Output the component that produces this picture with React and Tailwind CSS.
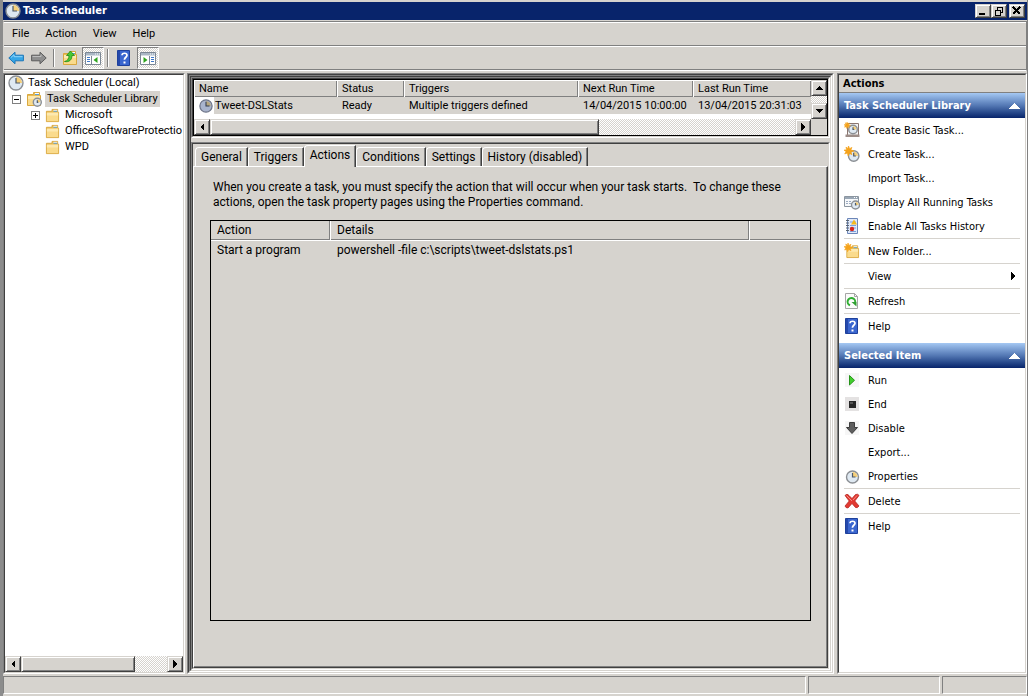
import { useState } from 'react'

// ─── Bevels ───────────────────────────────────────────────────────────────────

const RAISED =
  'border border-t-[#d6d3ce] border-l-[#d6d3ce] border-r-[#404040] border-b-[#404040] bg-[#d6d3ce] shadow-[inset_1px_1px_#fff,inset_-1px_-1px_#808080]'

const TRACK =
  'bg-[repeating-conic-gradient(#fff_0_25%,#d6d3ce_0_50%)] bg-[length:2px_2px]'

function Inset({ className = '', children }) {
  return (
    <div className={`flex flex-col min-w-0 min-h-0 border border-t-[#808080] border-l-[#808080] border-r-white border-b-white ${className}`}>
      <div className="flex flex-col flex-1 min-w-0 min-h-0 border border-t-[#404040] border-l-[#404040] border-r-[#d6d3ce] border-b-[#d6d3ce]">
        {children}
      </div>
    </div>
  )
}

// ─── Icons ────────────────────────────────────────────────────────────────────

function Icon({ children, className = 'w-4 h-4' }) {
  return (
    <svg viewBox="0 0 16 16" className={`${className} shrink-0`} aria-hidden="true">
      {children}
    </svg>
  )
}

function ClockFace({ cx = 8, cy = 8, r = 7 }) {
  return (
    <g>
      <circle cx={cx} cy={cy} r={r} fill="#dfe9f2" stroke="#8b8f94" strokeWidth="1.4" />
      <path d={`M${cx} ${cy}V${cy - r + 1}A${r - 1} ${r - 1} 0 0 1 ${cx + r - 1} ${cy}Z`} fill="#f6cf78" />
      <path d={`M${cx} ${cy - r + 2}V${cy}H${cx + r - 3}`} fill="none" stroke="#4d5a6b" strokeWidth="1.2" />
    </g>
  )
}

function FolderShape() {
  return (
    <g>
      <path d="M1.5 3.5h6v-2h6v3h1v10h-13z" fill="#e9bd55" stroke="#d9a83f" />
      <path d="M9 2.5h4" stroke="#fff" />
      <path d="M9 3.5h4" stroke="#5aa0d8" />
      <path d="M2 5h12v9H2z" fill="#fadb8c" />
      <path d="M2 5h12v3H2z" fill="#fde9b0" />
    </g>
  )
}

const Star = () => (
  <path d="M5 0l1.200 3 2.600-1.400-1.200 2.700L11 5.500 7.700 6.600l1 3-2.800-1.600L4.600 11 3.700 7.800.8 8.800l1.500-2.700L0 4.600l3-.4-.8-2.900 2.200 1.500z" fill="#f5a31c" stroke="#f5a31c" strokeWidth=".8" />
)

const ClockIcon = () => <Icon><ClockFace /></Icon>

const TaskIcon = () => (
  <Icon className="w-[14px] h-[14px]">
    <circle cx="8" cy="8" r="7" fill="#a9b4cc" stroke="#6d7488" strokeWidth="1.400" />
    <path d="M8 8V2.500A5.500 5.500 0 0 1 13.500 8z" fill="#b6a77e" />
    <path d="M8 3v5h4" fill="none" stroke="#333c50" strokeWidth="1.200" />
  </Icon>
)

const FolderIcon = () => <Icon className="w-[15px] h-[15px]"><FolderShape /></Icon>

const LibraryIcon = () => (
  <Icon>
    <FolderShape />
    <ClockFace cx={11.3} cy={11.3} r={4} />
  </Icon>
)

const HelpIcon = () => (
  <Icon>
    <path d="M1.500 .5h12v15h-12z" fill="#3a66cf" stroke="#1f419c" />
    <path d="M2 1h2v14H2z" fill="#2549ac" />
    <path d="M6 5.200C6 2.600 11 2.500 11 5.300c0 2-2.600 2-2.600 4.500" fill="none" stroke="#fff" strokeWidth="1.700" />
    <path d="M7.500 11.500h2v2h-2z" fill="#fff" />
  </Icon>
)

const BackIcon = () => (
  <Icon>
    <path d="M.8 8L7 2.200v3h8.400v5.600H7v3z" fill="#37a6e6" stroke="#1c76b8" />
    <path d="M3 7.500l3-2.800v2h8.500" fill="none" stroke="#8fd6fa" />
  </Icon>
)

const ForwardIcon = () => (
  <Icon>
    <path d="M15.200 8L9 2.200v3H.6v5.600H9v3z" fill="#8f8f8f" stroke="#5c5c5c" />
    <path d="M1.500 6.500H10v-2" fill="none" stroke="#bdbdbd" />
  </Icon>
)

const UpFolderIcon = () => (
  <Icon>
    <FolderShape />
    <path d="M2.500 11.500C5.500 11 7 8.500 7 5.500H4.500L8.500 1l4 4.500H10c0 4-2.500 7-7.500 6z" fill="#49c935" stroke="#1f8a16" strokeWidth=".8" />
  </Icon>
)

function PaneIcon({ side }) {
  return (
    <Icon>
      <path d="M.5 2.500h15v12H.5z" fill="#fff" stroke="#7b8794" />
      <path d="M1 3h14v2.500H1z" fill="#a9b6c4" />
      <path d="M10 4h1M12 4h1M14 4h1" stroke="#fff" />
      {side === 'left' ? (
        <g>
          <path d="M6.500 6v8" stroke="#7b8794" />
          <path d="M2 7.500h3M2 9.500h3M2 11.500h3" stroke="#3f78c8" />
          <path d="M12.500 7v6L8.500 10z" fill="#2ea51f" />
        </g>
      ) : (
        <g>
          <path d="M9.500 6v8" stroke="#7b8794" />
          <path d="M11 7.500h3M11 9.500h3M11 11.500h3" stroke="#3f78c8" />
          <path d="M3.500 7v6l4-3z" fill="#2ea51f" />
        </g>
      )}
    </Icon>
  )
}

const BasicTaskIcon = () => (
  <Icon>
    <path d="M3.500 1.500h11v13h-11z" fill="#f4f4f4" stroke="#8a7670" />
    <path d="M1.500 12.500h14v2.500h-14z" fill="#9c8d88" />
    <ClockFace cx={9} cy={7.5} r={4.3} />
    <g transform="scale(.6)"><Star /></g>
  </Icon>
)

const CreateTaskIcon = () => (
  <Icon>
    <ClockFace cx={9.7} cy={10} r={5.2} />
    <g transform="scale(.9)"><Star /></g>
  </Icon>
)

const RunningIcon = () => (
  <Icon>
    <path d="M.5 2.500h14v10H.5z" fill="#f7f9fb" stroke="#8b95a0" />
    <path d="M1 3h13v2H1z" fill="#9aa7b5" />
    <path d="M10 3.500h1M12 3.500h1" stroke="#fff" />
    <path d="M2 7.500h6M2 9.500h5" stroke="#9dabc0" strokeDasharray="2 1" />
    <ClockFace cx={11.5} cy={11} r={4} />
  </Icon>
)

const HistoryIcon = () => (
  <Icon>
    <path d="M3.500 .5h10v15h-10z" fill="#dfe9fa" stroke="#6c86b8" />
    <path d="M2 2.500h3M2 5h3M2 7.500h3M2 10h3M2 12.500h3" stroke="#5b6470" />
    <path d="M6 4h6M6 7.500h6M6 10h6M6 13.500h6" stroke="#7ba0dc" />
    <path d="M10 1.500l3 5H7z" fill="#f5b91c" />
    <circle cx="8" cy="11" r="2.200" fill="#d8261c" />
  </Icon>
)

const NewFolderIcon = () => (
  <Icon>
    <g transform="translate(1.500 1.500) scale(.9)"><FolderShape /></g>
    <g transform="scale(.8)"><Star /></g>
  </Icon>
)

const RefreshIcon = () => (
  <Icon>
    <path d="M1.500 .5h9l3 3v12h-12z" fill="#fbfbfb" stroke="#a5a5a5" />
    <path d="M10.500 .5v3h3" fill="none" stroke="#a5a5a5" />
    <path d="M6 12.300A3.800 3.800 0 1 1 11 10" fill="none" stroke="#2fae31" strokeWidth="2" />
    <path d="M7.500 9h5v4.500z" fill="#2f9e31" />
  </Icon>
)

const RunIcon = () => (
  <Icon>
    <path d="M1 1h14v14H1z" fill="#f6f6f6" />
    <path d="M5.500 3.500v9.500l5-4.700z" fill="#42cf2c" stroke="#26931a" />
  </Icon>
)

const EndIcon = () => (
  <Icon>
    <path d="M1 1h14v14H1z" fill="#e4e2e2" />
    <path d="M5 5h7v7H5z" fill="#262626" />
    <path d="M6 6h3v2H6z" fill="#555" />
  </Icon>
)

const DisableIcon = () => (
  <Icon>
    <path d="M1 1h14v14H1z" fill="#f6f6f6" />
    <path d="M5.500 2.500h5v5h3L8 13.500 2.500 7.500h3z" fill="#5e5e5e" stroke="#3d3d3d" />
  </Icon>
)

const PropertiesIcon = () => <Icon><ClockFace cx={8.5} cy={9} r={6} /></Icon>

const DeleteIcon = () => (
  <Icon>
    <path d="M1 2.500Q3 0 5 2.500L8 5.500 11.500 1.500Q14 .5 15 2.500L10.800 8 15 13Q13.500 15.500 11.500 14.500L8 10.500 4 15Q1.500 15 1 13L5.200 8z" fill="#e23a32" stroke="#b01d18" strokeWidth=".7" />
    <path d="M2.500 2.500L8 8M13 2.500L9 7" stroke="#f58b84" />
  </Icon>
)

function Arrow({ dir, className = 'w-2 h-2 text-black' }) {
  const d = {
    left: 'M6 0v8L2 4z',
    right: 'M2 0v8l4-4z',
    up: 'M0 6h8L4 2z',
    down: 'M0 2h8L4 6z',
  }[dir]
  return (
    <svg viewBox="0 0 8 8" className={`shrink-0 ${className}`} shapeRendering="crispEdges" aria-hidden="true">
      <path d={d} fill="currentColor" />
    </svg>
  )
}

function ScrollButton({ dir }) {
  return (
    <button aria-label={`Scroll ${dir}`} className={`w-4 h-4 shrink-0 flex items-center justify-center ${RAISED}`}>
      <Arrow dir={dir} />
    </button>
  )
}

// ─── Title, menu and tool bars ────────────────────────────────────────────────

function CaptionButton({ label, children, className = '' }) {
  return (
    <button aria-label={label} className={`w-4 h-[14px] flex items-center justify-center ${RAISED} ${className}`}>
      <svg viewBox="0 0 10 10" className="w-[10px] h-[10px]" fill="none" stroke="#000" shapeRendering="crispEdges">
        {children}
      </svg>
    </button>
  )
}

function TitleBar() {
  return (
    <header className="h-[18px] flex items-center pl-0.5 pr-0.5 bg-[#08246b] text-white">
      <ClockIcon />
      <h1 className="flex-1 ml-0.5 font-bold leading-4 font-['DejaVu_Sans_Condensed',sans-serif]">Task Scheduler</h1>
      <CaptionButton label="Minimize"><path d="M1 8h6" strokeWidth="2" /></CaptionButton>
      <CaptionButton label="Restore">
        <path d="M3 1h6M3.500 1v3M8.500 1v5M6 6.500h3M1 4.500h6M1.500 4v5M6.500 4v5M1 9.500h6" />
      </CaptionButton>
      <CaptionButton label="Close" className="ml-0.5"><path d="M1 1l7 7M8 1l-7 7" strokeWidth="1.600" /></CaptionButton>
    </header>
  )
}

const MENUS = ['File', 'Action', 'View', 'Help']

const Divider = () => <span className="w-px h-[18px] bg-[#808080] border-r border-white box-content" />

function ToolButton({ label, pressed, children, className = '' }) {
  return (
    <button
      aria-label={label}
      aria-pressed={pressed}
      className={[
        'h-[22px] w-[22px] flex items-center justify-center border',
        pressed ? `border-t-[#808080] border-l-[#808080] border-r-white border-b-white ${TRACK}` : 'border-transparent',
        className,
      ].join(' ')}
    >
      {children}
    </button>
  )
}

function Bars() {
  return (
    <div className="mt-px border border-t-[#808080] border-l-[#d6d3ce] border-r-[#808080] border-b-white">
      <nav className="h-[23px] flex items-center gap-4 pl-2 border-t border-white" aria-label="Menu bar">
        {MENUS.map(m => <button key={m}>{m}</button>)}
      </nav>
      <div className="border-t border-[#808080]" />
      <div className="h-[23px] flex items-center pl-px border-t border-white">
        <ToolButton label="Back"><BackIcon /></ToolButton>
        <ToolButton label="Forward" className="ml-px"><ForwardIcon /></ToolButton>
        <span className="w-[3px]" />
        <Divider />
        <ToolButton label="Up one level" className="ml-1"><UpFolderIcon /></ToolButton>
        <ToolButton label="Console tree" pressed className="ml-px"><PaneIcon side="left" /></ToolButton>
        <span className="w-[3px]" />
        <Divider />
        <ToolButton label="Help" className="ml-1"><HelpIcon /></ToolButton>
        <ToolButton label="Action pane" pressed className="ml-0.5"><PaneIcon side="right" /></ToolButton>
      </div>
      <div className="border-t border-[#808080]" />
    </div>
  )
}

// ─── Tree ─────────────────────────────────────────────────────────────────────

function Expander({ open }) {
  return (
    <button aria-label={open ? 'Collapse' : 'Expand'} className="w-[9px] h-[9px] shrink-0">
      <svg viewBox="0 0 9 9" className="w-[9px] h-[9px]" fill="none" shapeRendering="crispEdges">
        <path d="M.5 .5h8v8h-8z" stroke="#808080" />
        <path d={open ? 'M2 4.500h5' : 'M2 4.500h5M4.500 2v5'} stroke="#000" />
      </svg>
    </button>
  )
}

const FOLDERS = [
  { name: 'Microsoft', expandable: true },
  { name: 'OfficeSoftwareProtectio' },
  { name: 'WPD' },
]

function TreePane() {
  return (
    <Inset className="w-[182px] shrink-0 bg-white">
      <ul className="flex-1 min-h-0 overflow-hidden whitespace-nowrap">
        <li className="h-4 flex items-center gap-1 pl-[3px]"><ClockIcon /> Task Scheduler (Local)</li>
        <li>
          <div className="h-4 flex items-center pl-[7px]">
            <Expander open />
            <span className="ml-[5px] flex"><LibraryIcon /></span>
            <span className="ml-[3px] px-0.5 h-4 leading-4 bg-[#d6d3ce]">Task Scheduler Library</span>
          </div>
          <ul>
            {FOLDERS.map(f => (
              <li key={f.name} className="h-4 flex items-center pl-[26px]">
                {f.expandable ? <Expander /> : <span className="w-[9px] shrink-0" />}
                <span className="mx-[5px] flex"><FolderIcon /></span>
                {f.name}
              </li>
            ))}
          </ul>
        </li>
      </ul>
      <div className={`h-4 flex ${TRACK}`}>
        <ScrollButton dir="left" />
        <div className={`w-[114px] ${RAISED}`} />
        <span className="flex-1" />
        <ScrollButton dir="right" />
      </div>
    </Inset>
  )
}

// ─── Task list ────────────────────────────────────────────────────────────────

const HEAD_CELL =
  'h-[17px] p-0 pt-px pl-[5px] text-left font-normal bg-[#d6d3ce] shadow-[inset_1px_1px_#fff,inset_-1px_-1px_#808080]'

function TaskList() {
  return (
    <Inset className="h-[61px] shrink-0">
      <div className="flex-1 flex flex-col min-w-0 border border-black bg-white">
        <div className="flex flex-1">
          <div className="flex-1 min-w-0">
            <table className="w-full table-fixed border-collapse whitespace-nowrap">
              <colgroup>
                <col className="w-[143px]" />
                <col className="w-[67px]" />
                <col className="w-[174px]" />
                <col className="w-[115px]" />
                <col />
              </colgroup>
              <thead>
                <tr>
                  {['Name', 'Status', 'Triggers', 'Next Run Time', 'Last Run Time'].map(h => (
                    <th key={h} className={HEAD_CELL}>{h}</th>
                  ))}
                </tr>
              </thead>
              <tbody>
                <tr className="bg-[#d6d3ce]">
                  <td className="h-[17px] p-0">
                    <div className="flex items-center">
                      <span className="w-5 h-[17px] pl-[5px] flex items-center bg-white"><TaskIcon /></span>
                      <span className="pt-px pl-px">Tweet-DSLStats</span>
                    </div>
                  </td>
                  <td className="p-0 pt-px pl-[5px]">Ready</td>
                  <td className="p-0 pt-px pl-[5px]">Multiple triggers defined</td>
                  <td className="p-0 pt-px pl-[5px]">14/04/2015 10:00:00</td>
                  <td className="p-0 pt-px pl-[5px]">13/04/2015 20:31:03</td>
                </tr>
              </tbody>
            </table>
          </div>
          <div className={`w-4 flex flex-col justify-between ${TRACK}`}>
            <ScrollButton dir="up" />
            <ScrollButton dir="down" />
          </div>
        </div>
        <div className="h-4 flex bg-[#d6d3ce]">
          <div className={`flex-1 flex ${TRACK}`}>
            <ScrollButton dir="left" />
            <div className={`w-[63%] ${RAISED}`} />
            <span className="flex-1" />
            <ScrollButton dir="right" />
          </div>
          <span className="w-4" />
        </div>
      </div>
    </Inset>
  )
}

// ─── Task details ─────────────────────────────────────────────────────────────

const TABS = ['General', 'Triggers', 'Actions', 'Conditions', 'Settings', 'History (disabled)']

function TaskDetails() {
  const [active, setActive] = useState('Actions')

  return (
    <Inset className="flex-1 mt-1 text-[12px]">
      <div className="h-[22px] flex items-end pl-0.5 shrink-0" role="tablist">
        {TABS.map(tab => (
          <button
            key={tab}
            role="tab"
            aria-selected={active === tab}
            onClick={() => setActive(tab)}
            className={[
              'px-[5px] leading-4 whitespace-nowrap border-t border-l border-t-white border-l-white rounded-tl-sm shadow-[inset_-1px_0_#808080]',
              'border-r border-r-[#404040] bg-[#d6d3ce]',
              active === tab ? 'h-[22px] pb-1 -mb-px relative z-10' : 'h-[19px]',
            ].join(' ')}
          >
            {tab}
          </button>
        ))}
      </div>
      <div className="flex-1 flex flex-col px-4 pt-[13px] pb-[46px] border border-t-white border-l-white border-r-[#404040] border-b-[#404040] shadow-[inset_-1px_-1px_#808080]">
        <p className="leading-[15px] pl-[3px] pr-4 whitespace-pre-wrap">
          When you create a task, you must specify the action that will occur when your task starts.  To change these actions, open the task property pages using the Properties command.
        </p>
        <div className="flex-1 mt-2.5 border border-black">
          <table className="w-full table-fixed border-collapse">
            <colgroup>
              <col className="w-[119px]" />
              <col />
              <col className="w-[61px]" />
            </colgroup>
            <thead>
              <tr className="text-left">
                <th className="h-[19px] p-0 pl-1.5 font-normal shadow-[inset_-1px_-1px_#808080]">Action</th>
                <th className="h-[19px] p-0 pl-[7px] font-normal shadow-[inset_1px_0_#fff,inset_-1px_-1px_#808080]">Details</th>
                <th aria-label="Spare" className="p-0 shadow-[inset_1px_0_#fff,inset_0_-1px_#808080]" />
              </tr>
            </thead>
            <tbody>
              <tr className="border-t border-white">
                <td className="h-5 p-0 pl-1.5">Start a program</td>
                <td className="p-0 pl-[7px]">powershell -file c:\scripts\tweet-dslstats.ps1</td>
                <td className="p-0" />
              </tr>
            </tbody>
          </table>
        </div>
      </div>
    </Inset>
  )
}

// ─── Actions pane ─────────────────────────────────────────────────────────────

const LIBRARY_GROUPS = [
  [
    { label: 'Create Basic Task...', icon: BasicTaskIcon },
    { label: 'Create Task...', icon: CreateTaskIcon },
    { label: 'Import Task...' },
    { label: 'Display All Running Tasks', icon: RunningIcon },
    { label: 'Enable All Tasks History', icon: HistoryIcon },
  ],
  [{ label: 'New Folder...', icon: NewFolderIcon }],
  [{ label: 'View', submenu: true }],
  [{ label: 'Refresh', icon: RefreshIcon }],
  [{ label: 'Help', icon: HelpIcon }],
]

const ITEM_GROUPS = [
  [
    { label: 'Run', icon: RunIcon },
    { label: 'End', icon: EndIcon },
    { label: 'Disable', icon: DisableIcon },
    { label: 'Export...' },
    { label: 'Properties', icon: PropertiesIcon },
  ],
  [{ label: 'Delete', icon: DeleteIcon }],
  [{ label: 'Help', icon: HelpIcon }],
]

function ActionSection({ title, groups }) {
  return (
    <section className="mb-[5px]">
      <h2 className="h-[25px] flex items-center justify-between pt-px px-[5px] font-bold text-white bg-linear-to-b from-[#a5c8f3] via-[#5478b4] to-[#08246b]">
        {title}
        <Arrow dir="up" className="w-3 h-3 text-white" />
      </h2>
      {groups.map((group, i) => (
        <div key={i} className={`mx-[5px] ${i > 0 ? 'border-t border-[#d6d3ce]' : ''}`}>
          {group.map(({ label, icon: ItemIcon, submenu }) => (
            <button key={label} className="w-full h-6 flex items-center gap-2 pr-0.5 text-left">
              {ItemIcon ? <ItemIcon /> : <span className="w-4" />}
              <span className="flex-1 pt-0.5">{label}</span>
              {submenu && <Arrow dir="right" className="w-[10px] h-[10px] text-black" />}
            </button>
          ))}
        </div>
      ))}
    </section>
  )
}

function ActionsPane() {
  return (
    <Inset className="w-[190px] shrink-0 bg-white font-['DejaVu_Sans_Condensed',sans-serif]">
      <div className="h-[18px] leading-[18px] pl-1 font-bold bg-[#d6d3ce] border-b border-[#808080]">Actions</div>
      <ActionSection title="Task Scheduler Library" groups={LIBRARY_GROUPS} />
      <ActionSection title="Selected Item" groups={ITEM_GROUPS} />
    </Inset>
  )
}

// ─── Window ───────────────────────────────────────────────────────────────────

function StatusCell({ className }) {
  return <div className={`border border-t-[#808080] border-l-[#808080] border-r-white border-b-white ${className}`} />
}

export default function App() {
  return (
    <div className="h-screen flex flex-col pt-0.5 pb-0.5 border-l-[3px] border-r border-l-[#8c8c8c] border-r-[#808080] bg-[#d6d3ce] text-black text-[11px] leading-4 font-['Roboto',sans-serif]">
      <TitleBar />
      <Bars />
      <main className="flex-1 min-h-0 mt-0.5 mb-0.5 flex">
        <TreePane />
        <Inset className="flex-1 ml-0.5 mr-[3px]">
          <Inset className="flex-1">
            <TaskList />
            <TaskDetails />
          </Inset>
        </Inset>
        <ActionsPane />
      </main>
      <footer className="h-[18px] flex gap-0.5">
        <StatusCell className="flex-1" />
        <StatusCell className="w-[132px]" />
        <StatusCell className="w-[85px]" />
      </footer>
    </div>
  )
}
